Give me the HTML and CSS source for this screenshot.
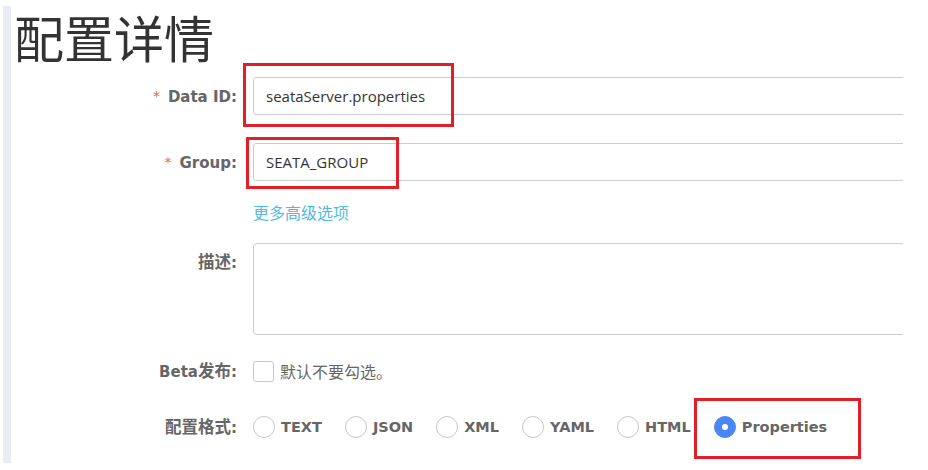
FILE: index.html
```html
<!DOCTYPE html>
<html lang="zh-CN">
<head>
<meta charset="utf-8">
<title>配置详情</title>
<link rel="stylesheet" href="styles.css">
</head>
<body>
<div class="page">
  <div class="sidebar"></div>
  <div class="main">
    <h1 class="title">配置详情</h1>
    <div class="form">
      <div class="row row-input">
        <label class="label"><span class="req">*</span>Data ID:</label>
        <div class="control control-clip"><div class="input">seataServer.properties</div></div>
      </div>
      <div class="row row-input row-group">
        <label class="label"><span class="req">*</span>Group:</label>
        <div class="control control-clip"><div class="input">SEATA_GROUP</div></div>
      </div>
      <div class="row row-link">
        <div class="label"></div>
        <div class="control"><a class="more">更多高级选项</a></div>
      </div>
      <div class="row row-textarea">
        <label class="label label-top"><span class="zh">描述</span>:</label>
        <div class="control control-clip"><div class="textarea"></div></div>
      </div>
      <div class="row row-check">
        <label class="label">Beta<span class="zh">发布</span>:</label>
        <div class="control control-inline">
          <span class="checkbox"></span>
          <span class="check-text">默认不要勾选。</span>
        </div>
      </div>
      <div class="row row-radio">
        <label class="label"><span class="zh">配置格式</span>:</label>
        <div class="control control-inline">
          <span class="radio-item"><span class="radio"></span><span class="radio-text">TEXT</span></span>
          <span class="radio-item"><span class="radio"></span><span class="radio-text">JSON</span></span>
          <span class="radio-item"><span class="radio"></span><span class="radio-text">XML</span></span>
          <span class="radio-item"><span class="radio"></span><span class="radio-text">YAML</span></span>
          <span class="radio-item"><span class="radio"></span><span class="radio-text">HTML</span></span>
          <span class="radio-item"><span class="radio radio-checked"></span><span class="radio-text">Properties</span></span>
        </div>
      </div>
    </div>
  </div>
</div>
<div class="mark mark-dataid"></div>
<div class="mark mark-group"></div>
<div class="mark mark-format"></div>
</body>
</html>
```

FILE: styles.css
```css
html, body {
  margin: 0;
  padding: 0;
  background: #ffffff;
}
body {
  position: relative;
  width: 928px;
  height: 470px;
  font-family: "DejaVu Sans", "Noto Sans CJK SC", sans-serif;
}
.page {
  display: flex;
  padding: 6px 0 0 3px;
}
.sidebar {
  width: 8px;
  height: 457px;
  background: #e9edf3;
  flex: none;
}
.main {
  width: 892px;
}
.title {
  margin: 0;
  padding-left: 3px;
  font-family: "Noto Sans CJK SC", sans-serif;
  font-weight: 400;
  font-size: 50px;
  line-height: 60px;
  color: #333333;
}
.form {
  padding-top: 11px;
}
.row {
  display: flex;
  align-items: center;
}
.label {
  width: 226px;
  flex: none;
  text-align: right;
  font-size: 15px;
  font-weight: bold;
  color: #666666;
  line-height: 20px;
}
.zh {
  font-family: "Noto Sans CJK SC", sans-serif;
  font-size: 16.5px;
}
.label-top {
  align-self: flex-start;
  padding-top: 8px;
}
.req {
  color: #f0643c;
  font-weight: normal;
  font-size: 14px;
  margin-right: 8px;
  vertical-align: 1px;
}
.control {
  flex: 1;
  margin-left: 16px;
  min-width: 0;
}
.control-clip {
  overflow: hidden;
}
.control-inline {
  display: flex;
  align-items: center;
}
.input {
  box-sizing: border-box;
  width: calc(100% + 40px);
  height: 38px;
  border: 1px solid #c9cbd3;
  border-radius: 3px;
  padding: 0 12px;
  font-family: "Open Sans", "Noto Sans CJK SC", sans-serif;
  font-size: 15px;
  line-height: 36px;
  color: #333333;
}
.row-group {
  margin-top: 28px;
}
.row-link {
  margin-top: 21px;
  height: 20px;
}
.more {
  font-family: "Noto Sans CJK SC", sans-serif;
  font-size: 16px;
  line-height: 20px;
  color: #4fbbe0;
  text-decoration: none;
}
.row-textarea {
  margin-top: 21px;
}
.textarea {
  box-sizing: border-box;
  width: calc(100% + 40px);
  height: 92px;
  border: 1px solid #c9cbd3;
  border-radius: 4px;
}
.row-check {
  margin-top: 26px;
  height: 20px;
}
.checkbox {
  box-sizing: border-box;
  width: 21px;
  height: 21px;
  border: 1px solid #c6c8cf;
  border-radius: 3px;
  background: #ffffff;
  flex: none;
}
.check-text {
  margin-left: 6px;
  font-family: "Noto Sans CJK SC", sans-serif;
  font-size: 16px;
  line-height: 20px;
  color: #666666;
}
.row-radio {
  margin-top: 35px;
  height: 22px;
}
.radio-item {
  display: flex;
  align-items: center;
  margin-right: 23px;
}
.radio {
  box-sizing: border-box;
  width: 22px;
  height: 22px;
  border: 1px solid #c6c8cf;
  border-radius: 50%;
  background: #ffffff;
  flex: none;
  position: relative;
}
.radio-checked {
  background: #4a86f5;
  border-color: #4a86f5;
}
.radio-checked::after {
  content: "";
  position: absolute;
  left: 7px;
  top: 7px;
  width: 6px;
  height: 6px;
  border-radius: 50%;
  background: #ffffff;
}
.radio-text {
  margin-left: 6px;
  font-size: 14.5px;
  font-weight: bold;
  color: #666666;
  line-height: 20px;
}
.mark {
  position: absolute;
  box-sizing: border-box;
  border: 3px solid #e41e26;
}
.mark-dataid {
  left: 243px;
  top: 63px;
  width: 211px;
  height: 64px;
}
.mark-group {
  left: 246px;
  top: 137px;
  width: 153px;
  height: 52px;
}
.mark-format {
  left: 694px;
  top: 398px;
  width: 167px;
  height: 61px;
}
```
